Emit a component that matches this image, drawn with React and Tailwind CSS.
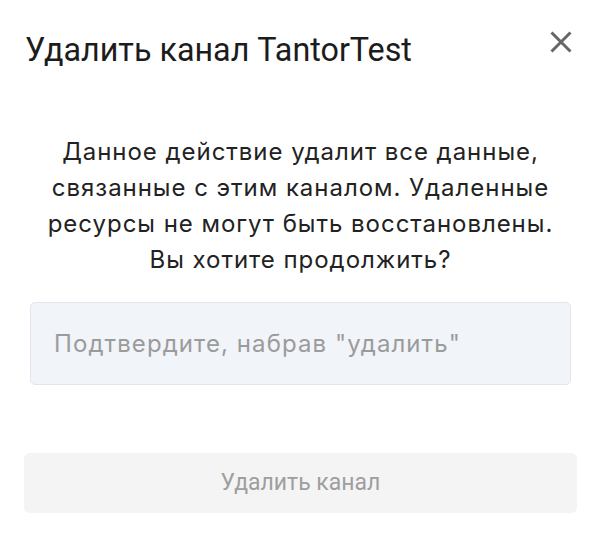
export default function App() {
  return (
    <div className="w-[606px] h-[550px] bg-white overflow-hidden">
      <div className="w-[601px]">
        <div className="flex items-start justify-between pl-[25px] pr-[29px] pt-[30px]">
          <h1 className="text-[32.3px] leading-[40px] text-[#1c1c1c] font-['Roboto',sans-serif]">Удалить канал TantorTest</h1>
          <button className="mt-[1px] w-[22px] h-[22px] flex items-center justify-center">
            <svg width="22" height="22" viewBox="0 0 22 22" fill="none" stroke="#666" strokeWidth="3">
              <path d="M1.5 1.5 L20.5 20.5 M20.5 1.5 L1.5 20.5" />
            </svg>
          </button>
        </div>
        <p className="mt-[64px] text-center text-[24px] leading-[36px] tracking-[0.04em] text-[#222] font-['Inter',sans-serif]">
          Данное действие удалит все данные,<br />
          связанные с этим каналом. Удаленные<br />
          ресурсы не могут быть восстановлены.<br />
          Вы хотите продолжить?
        </p>
        <div className="ml-[30px] mr-[30px] mt-[24px]">
          <input
            className="w-full h-[83px] bg-[#f1f4f9] border border-[#e2e6ec] rounded-[5px] px-[23px] text-[24px] tracking-[0.045em] font-['Inter',sans-serif] placeholder:text-[#9b9b9b] outline-none"
            placeholder={'Подтвердите, набрав "удалить"'}
          />
        </div>
        <div className="ml-[24px] mr-[24px] mt-[68px]">
          <button className="w-full h-[60px] bg-[#f4f4f4] rounded-[6px] text-[23px] text-[#9e9e9e] font-['Roboto',sans-serif]">
            Удалить канал
          </button>
        </div>
      </div>
    </div>
  );
}
